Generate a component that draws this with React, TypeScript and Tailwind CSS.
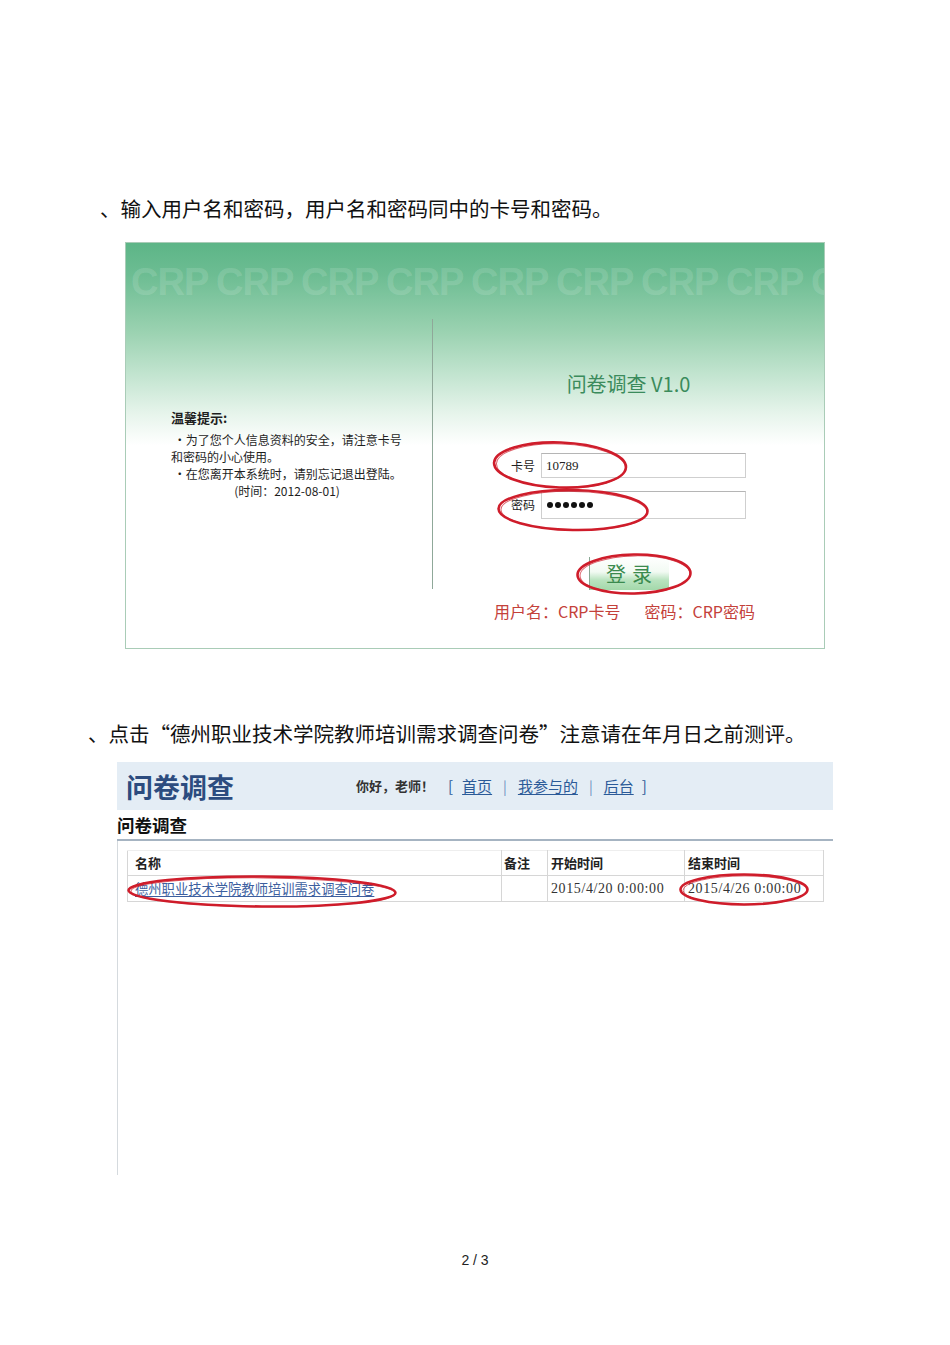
const cjk = "font-['Noto_Sans_CJK_SC','Noto_Sans',sans-serif]";

function Ellipses({ items, w, h }: { items: { cx: number; cy: number; rx: number; ry: number; r?: number }[]; w: number; h: number }) {
  return (
    <svg className="pointer-events-none absolute left-0 top-0" width={w} height={h} viewBox={`0 0 ${w} ${h}`}>
      {items.map((e, i) => (
        <g key={i} transform={`rotate(${e.r ?? 0} ${e.cx} ${e.cy})`}>
          <ellipse cx={e.cx} cy={e.cy} rx={e.rx} ry={e.ry} fill="none" stroke="#cf1d2b" strokeWidth="2.6" />
          <ellipse cx={e.cx + 1} cy={e.cy + 0.8} rx={e.rx - 1.5} ry={e.ry - 0.6} fill="none" stroke="#cf1d2b" strokeWidth="1" opacity="0.7" />
        </g>
      ))}
    </svg>
  );
}

function LoginShot() {
  return (
    <div className="relative ml-[125px] mt-[20px] h-[407px] w-[700px] overflow-hidden border border-[#a9ccb7] bg-[linear-gradient(to_bottom,#5db587_0%,#6dbd93_8%,#9bd2b1_22%,#c4e5d1_33%,#e6f4eb_42%,#ffffff_50%)]">
      {/* faint CRP watermark across the top */}
      <div className="pointer-events-none absolute left-[5px] top-[20px] flex whitespace-nowrap font-['Liberation_Sans',sans-serif] text-[38px] font-bold leading-none tracking-[-1px] text-white/15">
        {['CRP', 'CRP', 'CRP', 'CRP', 'CRP', 'CRP', 'CRP', 'CRP'].map((t, i) => (
          <span key={i} className="inline-block w-[85px] shrink-0">{t}</span>
        ))}
        <span className="inline-block w-[15px] shrink-0 overflow-hidden">C</span>
      </div>

      <div className="flex h-full">
        <div className={`w-[306px] pl-[45px] pt-[166px] text-[12px] leading-[17px] text-[#1e1e1e] ${cjk}`}>
          <div className="w-[232px]">
            <div className="text-[13px] font-bold leading-[18px]">温馨提示:</div>
            <div className="mt-[4px]">&nbsp;·为了您个人信息资料的安全，请注意卡号</div>
            <div>和密码的小心使用。</div>
            <div>&nbsp;·在您离开本系统时，请别忘记退出登陆。</div>
            <div className="text-center">(时间：2012-08-01)</div>
          </div>
        </div>
        <div className="mt-[76px] h-[270px] w-px bg-[#8fa899]" />
        <div className={`flex flex-1 flex-col items-center pt-[127px] ${cjk}`}>
          <div className="text-[20px] leading-[28px] text-[#3b8b5c]">问卷调查 V1.0</div>
          <div className="mt-[55px] flex items-center gap-[6px]">
            <span className="w-[24px] text-[12px] text-[#222]">卡号</span>
            <div className="flex h-[25px] w-[205px] items-center border border-[#cfcfcf] border-t-[#b5b5b5] bg-white pl-[4px] font-['Liberation_Serif',serif] text-[13px] text-[#222]">10789</div>
          </div>
          <div className="mt-[13px] flex items-center gap-[6px]">
            <span className="w-[24px] text-[12px] text-[#222]">密码</span>
            <div className="flex h-[28px] w-[205px] items-center gap-[2px] border border-[#cfcfcf] border-t-[#b5b5b5] bg-white pl-[5px]">
              {Array.from({ length: 6 }).map((_, i) => (
                <span key={i} className="h-[6px] w-[6px] rounded-full bg-[#111]" />
              ))}
            </div>
          </div>
          <div className="mt-[38px] flex h-[33px] w-[80px] items-center justify-center border-l border-[#8aa894] bg-[linear-gradient(to_bottom,#ffffff_0%,#f2faf3_45%,#b9e3bf_70%,#a3d8aa_100%)] text-[20px] leading-none tracking-[6px] text-[#3a8a4e]">
            <span className="pl-[6px]">登录</span>
          </div>
          <div className="mt-[10px] flex gap-[24px] pr-[8px] text-[16px] leading-[22px] text-[#c4413a]">
            <span>用户名：CRP卡号</span>
            <span>密码：CRP密码</span>
          </div>
        </div>
      </div>

      <Ellipses
        w={700}
        h={407}
        items={[
          { cx: 434, cy: 222, rx: 66, ry: 22.5, r: 2 },
          { cx: 447, cy: 267, rx: 74.5, ry: 20, r: 1 },
          { cx: 508, cy: 331, rx: 56.5, ry: 19.5, r: -1 },
        ]}
      />
    </div>
  );
}

function SurveyShot() {
  const time = "font-['Liberation_Serif',serif] text-[14px] tracking-[0.6px] text-[#333]";
  return (
    <div className={`relative ml-[117px] mt-[15px] flex h-[413px] w-[716px] flex-col ${cjk}`}>
      <div className="flex h-[48px] items-center bg-[#e4edf5]">
        <div className="w-[239px] pl-[9px] text-[27px] font-bold leading-none text-[#2c4c7f]">问卷调查</div>
        <div className="flex items-center text-[#2b5a98]">
          <span className="text-[13px] font-bold text-[#333]">你好，老师！</span>
          <span className="ml-[14px] text-[15px]">[</span>
          <span className="ml-[9px] text-[15px] underline underline-offset-2">首页</span>
          <span className="mx-[11px] text-[14px] text-[#6b8fbf]">|</span>
          <span className="text-[15px] underline underline-offset-2">我参与的</span>
          <span className="mx-[11px] text-[14px] text-[#6b8fbf]">|</span>
          <span className="text-[15px] underline underline-offset-2">后台</span>
          <span className="ml-[8px] text-[15px]">]</span>
        </div>
      </div>
      <div className="flex h-[31px] items-center border-b-2 border-[#a6b4c2] text-[17.5px] font-bold leading-none text-[#111]">问卷调查</div>
      <div className="flex-1 border-l border-[#d5dade] pl-[9px] pt-[9px]">
        <table className="w-[696px] table-fixed border-collapse text-[13px] text-[#222]">
          <colgroup>
            <col className="w-[374px]" />
            <col className="w-[46px]" />
            <col className="w-[137px]" />
            <col className="w-[139px]" />
          </colgroup>
          <thead>
            <tr className="h-[25px]">
              <th className="border border-[#d6d6d6] border-t-[#eeeeee] pl-[7px] text-left font-bold">名称</th>
              <th className="border border-[#d6d6d6] border-t-[#eeeeee] pl-[2px] text-left font-bold">备注</th>
              <th className="border border-[#d6d6d6] border-t-[#eeeeee] pl-[3px] text-left font-bold">开始时间</th>
              <th className="border border-[#d6d6d6] border-t-[#eeeeee] pl-[3px] text-left font-bold">结束时间</th>
            </tr>
          </thead>
          <tbody>
            <tr className="h-[26px]">
              <td className="border border-[#d6d6d6] pl-[7px] text-[13.3px] text-[#3d5f9f] underline underline-offset-2">德州职业技术学院教师培训需求调查问卷</td>
              <td className="border border-[#d6d6d6]" />
              <td className={`border border-[#d6d6d6] pl-[3px] ${time}`}>2015/4/20 0:00:00</td>
              <td className={`border border-[#d6d6d6] pl-[3px] ${time}`}>2015/4/26 0:00:00</td>
            </tr>
          </tbody>
        </table>
      </div>

      <Ellipses
        w={716}
        h={413}
        items={[
          { cx: 145, cy: 129.5, rx: 133.5, ry: 15, r: 0.5 },
          { cx: 627, cy: 127.5, rx: 63.5, ry: 15 },
        ]}
      />
    </div>
  );
}

export default function App() {
  return (
    <div className={`h-[1345px] w-[950px] bg-white text-[#111] ${cjk}`}>
      <div className="pl-[100px] pt-[194px] text-[20.5px] leading-[28px]">、输入用户名和密码，用户名和密码同中的卡号和密码。</div>
      <LoginShot />
      <div className="mt-[70px] pl-[88px] text-[20.5px] leading-[28px]">、点击“德州职业技术学院教师培训需求调查问卷”注意请在年月日之前测评。</div>
      <SurveyShot />
      <div className="mt-[75px] text-center font-['Liberation_Sans',sans-serif] text-[14px] leading-[20px] text-[#222]">2 / 3</div>
    </div>
  );
}
